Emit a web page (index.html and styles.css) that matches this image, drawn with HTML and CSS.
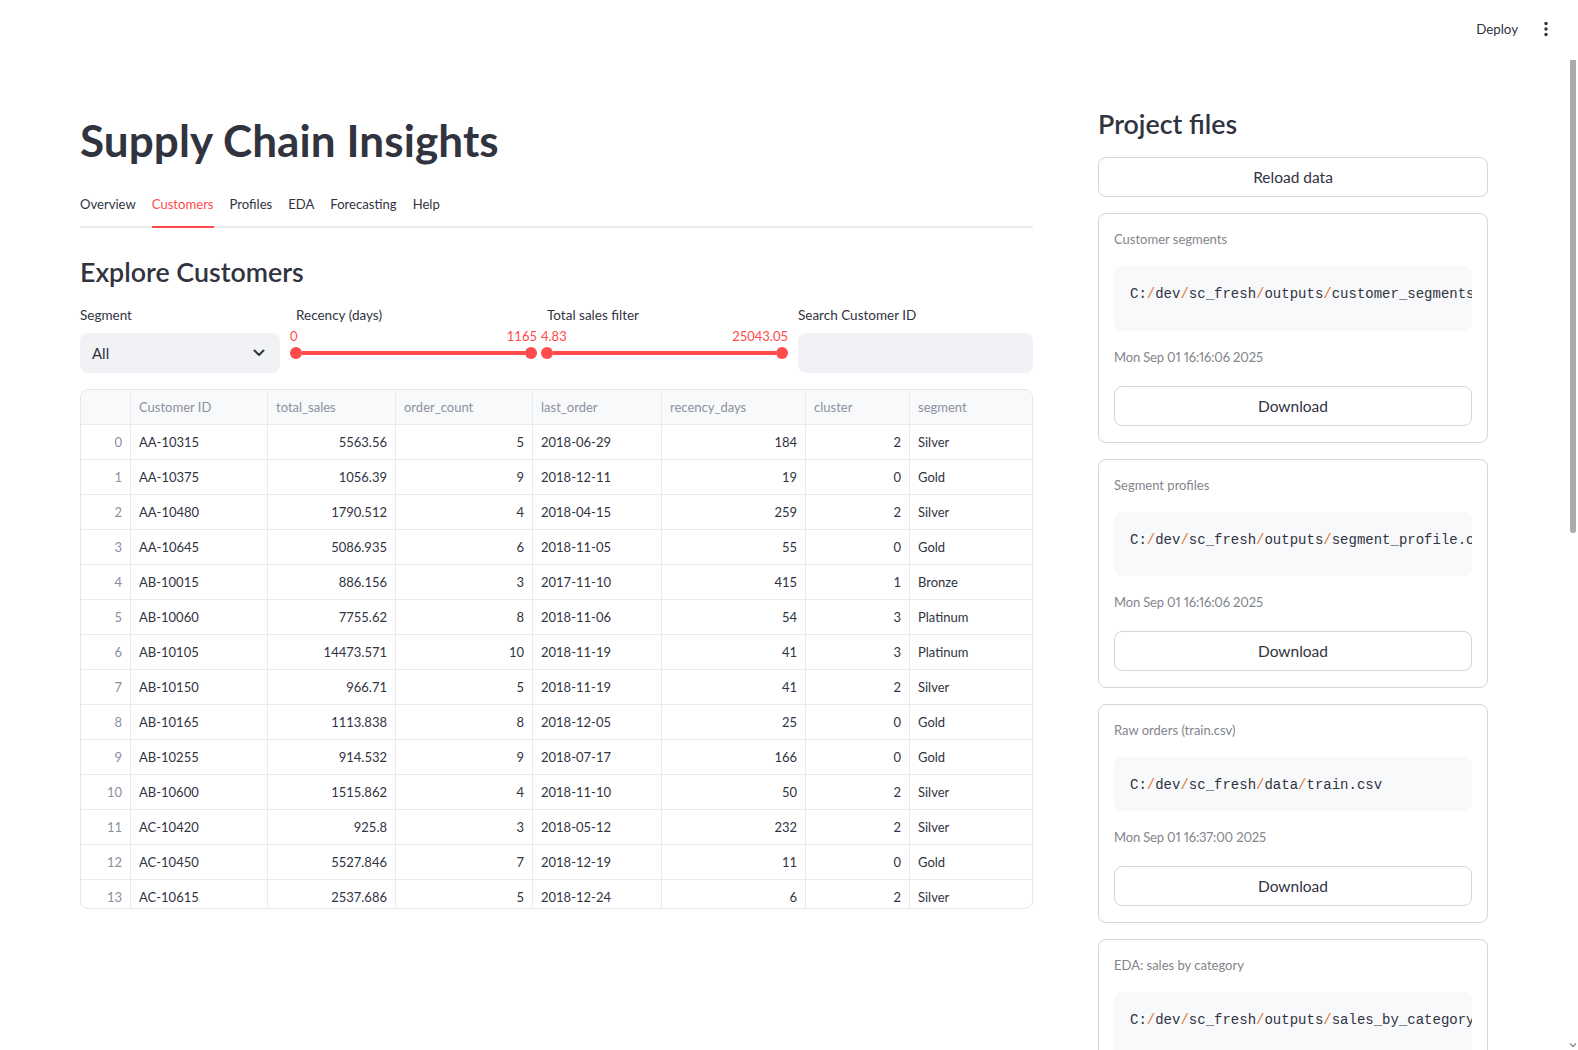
FILE: index.html
```
<!DOCTYPE html>
<html lang="en">
<head>
<meta charset="utf-8">
<title>Supply Chain Insights</title>
<link rel="stylesheet" href="styles.css">
</head>
<body>
<div class="page">
  <header class="topbar">
    <span class="deploy">Deploy</span>
    <svg class="kebab" width="16" height="16" viewBox="0 0 16 16"><circle cx="8" cy="2.5" r="1.7" fill="#31333f"/><circle cx="8" cy="8" r="1.7" fill="#31333f"/><circle cx="8" cy="13.5" r="1.7" fill="#31333f"/></svg>
  </header>
  <div class="viewport">
    <div class="scroll">
      <div class="columns">
        <main class="main-col">
          <h1 class="title">Supply Chain Insights</h1>
          <nav class="tabs">
            <span class="tab">Overview</span>
            <span class="tab active">Customers</span>
            <span class="tab">Profiles</span>
            <span class="tab">EDA</span>
            <span class="tab">Forecasting</span>
            <span class="tab">Help</span>
          </nav>
          <h3 class="section">Explore Customers</h3>
          <div class="filters">
            <div class="field">
              <div class="label">Segment</div>
              <div class="select"><span>All</span>
                <svg width="12" height="8" viewBox="0 0 12 8"><path d="M1.5 1.5 L6 6 L10.5 1.5" fill="none" stroke="#31333f" stroke-width="2" stroke-linecap="round" stroke-linejoin="round"/></svg>
              </div>
            </div>
            <div class="field">
              <div class="label">Recency (days)</div>
              <div class="slider">
                <div class="values"><span>0</span><span>1165</span></div>
                <div class="track"><span class="knob"></span><span class="line"></span><span class="knob"></span></div>
              </div>
            </div>
            <div class="field">
              <div class="label">Total sales filter</div>
              <div class="slider">
                <div class="values"><span>4.83</span><span>25043.05</span></div>
                <div class="track"><span class="knob"></span><span class="line"></span><span class="knob"></span></div>
              </div>
            </div>
            <div class="field">
              <div class="label">Search Customer ID</div>
              <div class="input"></div>
            </div>
          </div>
          <div class="table">
            <div class="row head">
              <div class="c"></div><div class="c">Customer ID</div><div class="c">total_sales</div><div class="c">order_count</div><div class="c">last_order</div><div class="c">recency_days</div><div class="c">cluster</div><div class="c">segment</div>
            </div>
            <div class="row"><div class="c idx">0</div><div class="c">AA-10315</div><div class="c num">5563.56</div><div class="c num">5</div><div class="c">2018-06-29</div><div class="c num">184</div><div class="c num">2</div><div class="c">Silver</div></div>
            <div class="row"><div class="c idx">1</div><div class="c">AA-10375</div><div class="c num">1056.39</div><div class="c num">9</div><div class="c">2018-12-11</div><div class="c num">19</div><div class="c num">0</div><div class="c">Gold</div></div>
            <div class="row"><div class="c idx">2</div><div class="c">AA-10480</div><div class="c num">1790.512</div><div class="c num">4</div><div class="c">2018-04-15</div><div class="c num">259</div><div class="c num">2</div><div class="c">Silver</div></div>
            <div class="row"><div class="c idx">3</div><div class="c">AA-10645</div><div class="c num">5086.935</div><div class="c num">6</div><div class="c">2018-11-05</div><div class="c num">55</div><div class="c num">0</div><div class="c">Gold</div></div>
            <div class="row"><div class="c idx">4</div><div class="c">AB-10015</div><div class="c num">886.156</div><div class="c num">3</div><div class="c">2017-11-10</div><div class="c num">415</div><div class="c num">1</div><div class="c">Bronze</div></div>
            <div class="row"><div class="c idx">5</div><div class="c">AB-10060</div><div class="c num">7755.62</div><div class="c num">8</div><div class="c">2018-11-06</div><div class="c num">54</div><div class="c num">3</div><div class="c">Platinum</div></div>
            <div class="row"><div class="c idx">6</div><div class="c">AB-10105</div><div class="c num">14473.571</div><div class="c num">10</div><div class="c">2018-11-19</div><div class="c num">41</div><div class="c num">3</div><div class="c">Platinum</div></div>
            <div class="row"><div class="c idx">7</div><div class="c">AB-10150</div><div class="c num">966.71</div><div class="c num">5</div><div class="c">2018-11-19</div><div class="c num">41</div><div class="c num">2</div><div class="c">Silver</div></div>
            <div class="row"><div class="c idx">8</div><div class="c">AB-10165</div><div class="c num">1113.838</div><div class="c num">8</div><div class="c">2018-12-05</div><div class="c num">25</div><div class="c num">0</div><div class="c">Gold</div></div>
            <div class="row"><div class="c idx">9</div><div class="c">AB-10255</div><div class="c num">914.532</div><div class="c num">9</div><div class="c">2018-07-17</div><div class="c num">166</div><div class="c num">0</div><div class="c">Gold</div></div>
            <div class="row"><div class="c idx">10</div><div class="c">AB-10600</div><div class="c num">1515.862</div><div class="c num">4</div><div class="c">2018-11-10</div><div class="c num">50</div><div class="c num">2</div><div class="c">Silver</div></div>
            <div class="row"><div class="c idx">11</div><div class="c">AC-10420</div><div class="c num">925.8</div><div class="c num">3</div><div class="c">2018-05-12</div><div class="c num">232</div><div class="c num">2</div><div class="c">Silver</div></div>
            <div class="row"><div class="c idx">12</div><div class="c">AC-10450</div><div class="c num">5527.846</div><div class="c num">7</div><div class="c">2018-12-19</div><div class="c num">11</div><div class="c num">0</div><div class="c">Gold</div></div>
            <div class="row"><div class="c idx">13</div><div class="c">AC-10615</div><div class="c num">2537.686</div><div class="c num">5</div><div class="c">2018-12-24</div><div class="c num">6</div><div class="c num">2</div><div class="c">Silver</div></div>
          </div>
        </main>
        <aside class="side-col">
          <h3 class="section side-title">Project files</h3>
          <button class="btn">Reload data</button>
          <div class="card">
            <div class="caption">Customer segments</div>
            <div class="code wide">C:<i>/</i>dev<i>/</i>sc_fresh<i>/</i>outputs<i>/</i>customer_segments.csv</div>
            <div class="caption stamp">Mon Sep 01 16:16:06 2025</div>
            <button class="btn">Download</button>
          </div>
          <div class="card">
            <div class="caption">Segment profiles</div>
            <div class="code wide">C:<i>/</i>dev<i>/</i>sc_fresh<i>/</i>outputs<i>/</i>segment_profile.csv</div>
            <div class="caption stamp">Mon Sep 01 16:16:06 2025</div>
            <button class="btn">Download</button>
          </div>
          <div class="card">
            <div class="caption">Raw orders (train.csv)</div>
            <div class="code">C:<i>/</i>dev<i>/</i>sc_fresh<i>/</i>data<i>/</i>train.csv</div>
            <div class="caption stamp">Mon Sep 01 16:37:00 2025</div>
            <button class="btn">Download</button>
          </div>
          <div class="card">
            <div class="caption">EDA: sales by category</div>
            <div class="code wide">C:<i>/</i>dev<i>/</i>sc_fresh<i>/</i>outputs<i>/</i>sales_by_category.csv</div>
            <div class="caption stamp">Mon Sep 01 16:16:06 2025</div>
            <button class="btn">Download</button>
          </div>
        </aside>
      </div>
    </div>
    <div class="scrollbar">
      <div class="thumb"></div>
      <svg class="arrow" width="8" height="6" viewBox="0 0 8 6"><path d="M1 1.5 L4 4.5 L7 1.5" fill="none" stroke="#8a8a90" stroke-width="1.3"/></svg>
    </div>
  </div>
</div>
</body>
</html>
```
FILE: styles.css
```
* { box-sizing: border-box; }
html, body { margin: 0; padding: 0; }
body {
  font-family: Lato, "Noto Sans", sans-serif;
  color: #31333f;
  background: #ffffff;
}
.page {
  width: 1578px;
  height: 1050px;
  overflow: hidden;
  display: flex;
  flex-direction: column;
}
.topbar {
  height: 60px;
  flex: none;
  display: flex;
  align-items: center;
  justify-content: flex-end;
  padding-right: 24px;
  padding-bottom: 2px;
  gap: 20px;
}
.deploy { font-size: 13.3px; color: #31333f; }
.kebab { display: block; }
.viewport {
  flex: 1;
  display: flex;
  min-height: 0;
}
.scroll {
  flex: 1;
  overflow: hidden;
}
.scrollbar {
  width: 10px;
  flex: none;
  display: flex;
  flex-direction: column;
  align-items: center;
  justify-content: space-between;
  padding-bottom: 2px;
}
.scrollbar .thumb {
  width: 6px;
  height: 473px;
  background: #a9a9ae;
  border-radius: 0 0 3px 3px;
}
.scrollbar .arrow { display: block; }
.columns {
  display: flex;
  gap: 65px;
  padding: 48px 80px 0 80px;
  align-items: flex-start;
}
.main-col { width: 953px; flex: none; }
.side-col { width: 390px; flex: none; display: flex; flex-direction: column; }

.title {
  margin: 6px 0 0 0;
  font-size: 44px;
  font-weight: 700;
  line-height: 1.2;
  letter-spacing: 0.1px;
  color: #31333f;
}
.tabs {
  margin-top: 27px;
  display: flex;
  gap: 16px;
  border-bottom: 2px solid #ebebee;
}
.tab {
  font-size: 13.1px;
  line-height: 21px;
  padding-bottom: 11px;
  margin-bottom: -2px;
  border-bottom: 2px solid transparent;
}
.tab.active { color: #ff4b4b; border-bottom-color: #ff4b4b; }

.section {
  margin: 0;
  font-size: 26.8px;
  font-weight: 600;
  line-height: 1.2;
  color: #31333f;
}
.main-col .section { margin-top: 28px; }

.filters {
  margin-top: 17px;
  display: grid;
  grid-template-columns: 200px 1fr 1fr 1fr;
  column-gap: 16px;
}
.label {
  font-size: 13.5px;
  line-height: 21px;
  margin-bottom: 7px;
}
.select {
  height: 40px;
  background: #f0f2f6;
  border-radius: 8px;
  display: flex;
  align-items: center;
  justify-content: space-between;
  padding: 0 15px 0 12px;
  font-size: 15px;
}
.input {
  height: 40px;
  background: #f0f2f6;
  border-radius: 8px;
}
.slider { margin: -6px -6px 0 -6px; }
.values {
  display: flex;
  justify-content: space-between;
  font-size: 13px;
  line-height: 18px;
  color: #ff4b4b;
}
.track {
  margin-top: 2px;
  display: flex;
  align-items: center;
  height: 12px;
}
.knob {
  width: 12px;
  height: 12px;
  border-radius: 50%;
  background: #ff4b4b;
  flex: none;
}
.line {
  flex: 1;
  height: 4px;
  background: #ff4b4b;
}

.table {
  margin-top: 16px;
  height: 520px;
  overflow: hidden;
  border: 1px solid #e6e7eb;
  border-radius: 8px;
  font-size: 13px;
}
.row {
  display: grid;
  grid-template-columns: 50px 137px 128px 137px 129px 144px 104px 1fr;
  height: 35px;
  border-bottom: 1px solid #ebebee;
}
.row.head { background: #f8f9fb; color: #8d90a0; }
.c {
  padding: 0 8px;
  display: flex;
  align-items: center;
  border-right: 1px solid #ebebee;
  white-space: nowrap;
  overflow: hidden;
}
.c:last-child { border-right: none; }
.c.num, .c.idx { justify-content: flex-end; }
.c.idx { color: #8d90a0; }

.side-title { margin-top: 0; }
.btn {
  display: block;
  width: 100%;
  height: 40px;
  background: #ffffff;
  border: 1px solid #d6d6d9;
  border-radius: 8px;
  font-family: Lato, "Noto Sans", sans-serif;
  font-size: 15.5px;
  color: #31333f;
  padding: 0;
}
.side-title + .btn { margin-top: 17px; }
.card {
  margin-top: 16px;
  border: 1px solid #d6d6d9;
  border-radius: 8px;
  padding: 15px 15px 16px 15px;
  display: flex;
  flex-direction: column;
  gap: 16px;
}
.caption {
  font-size: 13px;
  line-height: 21px;
  color: #83858c;
}
.caption.stamp {
  margin-bottom: 2px;
  font-variant-numeric: proportional-nums;
  letter-spacing: -0.15px;
}
.code {
  background: #f8f9fb;
  border-radius: 8px;
  padding: 17px 16px 15px 16px;
  font-family: "Liberation Mono", "DejaVu Sans Mono", monospace;
  font-size: 14px;
  line-height: 22.4px;
  white-space: nowrap;
  overflow: hidden;
  color: #31333f;
}
.code.wide { padding-bottom: 25px; }
.code i { font-style: normal; color: #e07b39; }
```
